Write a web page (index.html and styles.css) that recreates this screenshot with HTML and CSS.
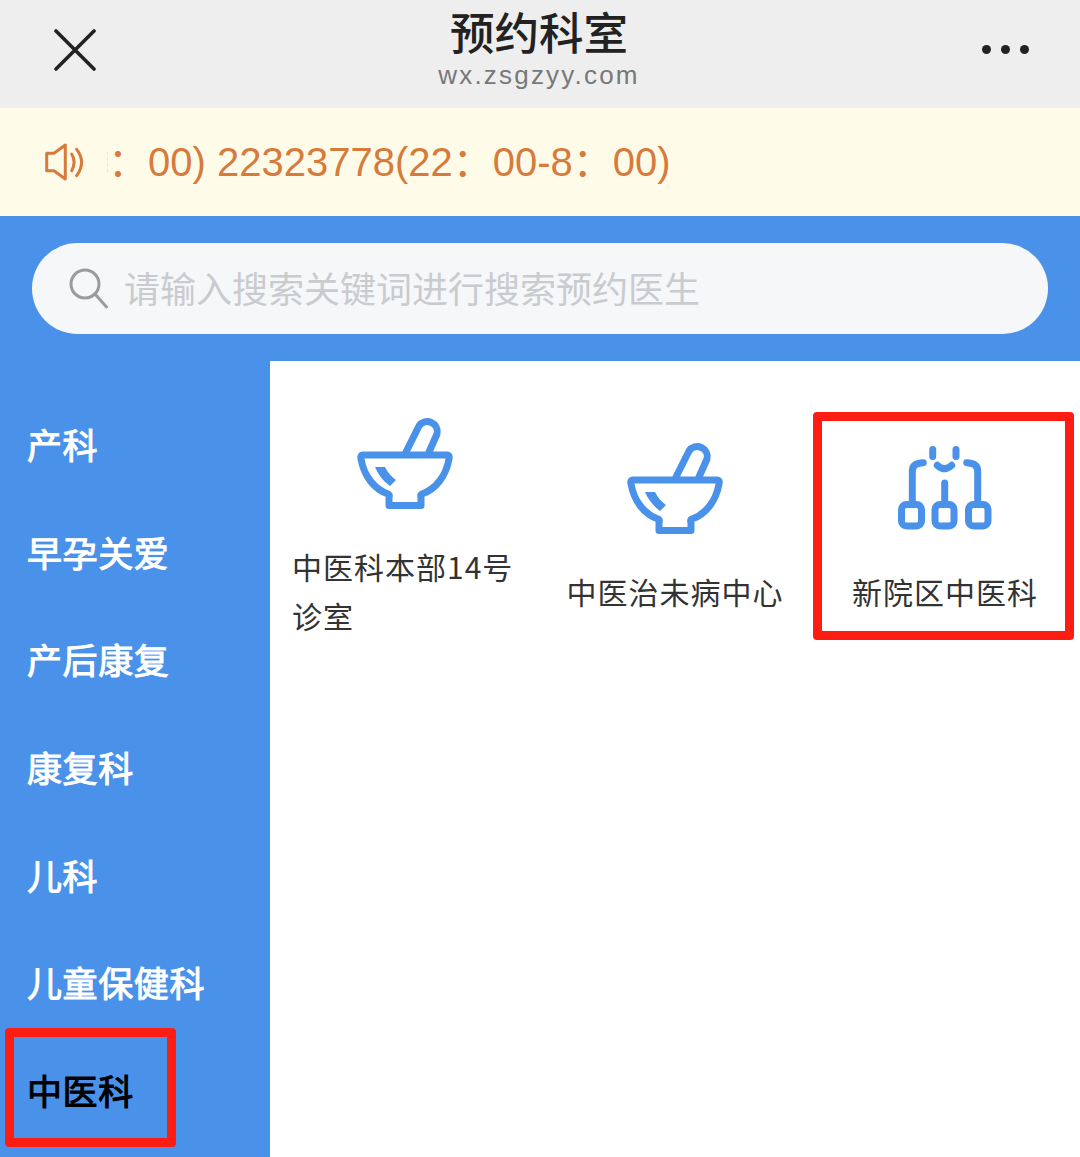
FILE: index.html
```html
<!DOCTYPE html>
<html>
  <head>
    <title>预约科室</title>
    <meta name="viewport" content="width=device-width, initial-scale=1.0">
    <link rel="stylesheet" href="styles.css">
  </head>
  <body>
    <header class="topbar">
      <svg class="close-icon" width="42" height="42" viewBox="0 0 42 42">
        <path d="M2 2 L40 40 M40 2 L2 40" />
      </svg>
      <div class="title-block">
        <div class="title">预约科室</div>
        <div class="domain">wx.zsgzyy.com</div>
      </div>
      <div class="more-dots"><span></span><span></span><span></span></div>
    </header>

    <div class="notice">
      <svg class="speaker-icon" width="44" height="44" viewBox="0 0 44 44">
        <path d="M2.7 12.3 H10 L21.3 4 V38 L10 29.7 H2.7 Z" />
        <path d="M27.7 13 Q32.5 21 27.7 29.7" />
        <path d="M32.7 8.3 Q42.5 21 32.7 34.7" />
      </svg>
      <span class="clip-edge"></span>
      <span class="notice-text">：00) 22323778(22：00-8：00)</span>
    </div>

    <div class="search-wrap">
      <div class="search-box">
        <svg class="search-icon" width="42" height="42" viewBox="0 0 42 42">
          <circle cx="17" cy="17" r="14" />
          <path d="M27 27 L38.5 40" />
        </svg>
        <span class="placeholder">请输入搜索关键词进行搜索预约医生</span>
      </div>
    </div>

    <main class="main">
      <nav class="sidebar">
        <div class="side-item">产科</div>
        <div class="side-item">早孕关爱</div>
        <div class="side-item">产后康复</div>
        <div class="side-item">康复科</div>
        <div class="side-item">儿科</div>
        <div class="side-item">儿童保健科</div>
        <div class="side-item active">中医科</div>
      </nav>

      <section class="dept-grid">
        <div class="dept">
          <svg class="dept-icon" width="100" height="100" viewBox="0 0 100 100">
            <path d="M51 38 L64 12 A10 10 0 0 1 82 20 L74 38" />
            <path d="M8 41 H92 Q95 41 94 45 C91 62 81 75 67 80 Q65 81 66 84 V91.5 H34 V84 Q35 81 33 80 C19 75 9 62 6 45 Q5 41 8 41 Z" />
            <path class="shine" d="M20 53 H30 C33 59 37 63 41 66 L35 72 C28 67 23 60 20 53 Z" />
          </svg>
          <div class="dept-name">中医科本部14号诊室</div>
        </div>
        <div class="dept">
          <svg class="dept-icon" width="100" height="100" viewBox="0 0 100 100">
            <path d="M51 38 L64 12 A10 10 0 0 1 82 20 L74 38" />
            <path d="M8 41 H92 Q95 41 94 45 C91 62 81 75 67 80 Q65 81 66 84 V91.5 H34 V84 Q35 81 33 80 C19 75 9 62 6 45 Q5 41 8 41 Z" />
            <path class="shine" d="M20 53 H30 C33 59 37 63 41 66 L35 72 C28 67 23 60 20 53 Z" />
          </svg>
          <div class="dept-name">中医治未病中心</div>
        </div>
        <div class="dept">
          <svg class="dept-icon" width="100" height="100" viewBox="0 0 100 100">
            <rect x="6.5" y="65.5" width="20" height="21.5" rx="5" />
            <rect x="40" y="65.5" width="19" height="21.5" rx="5" />
            <rect x="73.5" y="65.5" width="19.5" height="21.5" rx="5" />
            <path d="M17.3 65 V32 Q17.3 24 28.3 23.7" />
            <path d="M82.7 65 V32 Q82.7 24 71.7 23.7" />
            <path d="M49.7 44 V65" />
            <path d="M42.3 26.3 Q49.7 33 56.7 26.3" />
            <path d="M37.7 10.5 V17.5 M61 10.5 V17.5" />
          </svg>
          <div class="dept-name">新院区中医科</div>
        </div>
      </section>
    </main>

    <div class="mark mark-menu"></div>
    <div class="mark mark-dept"></div>
  </body>
</html>
```

FILE: styles.css
```css
/* page */
body {
  font-family: "Liberation Sans", "Noto Sans CJK SC", sans-serif;
  margin: 0;
  width: 1080px;
  height: 1157px;
  overflow: hidden;
  position: relative;
  background-color: #fff;
}

/* top bar */
.topbar {
  height: 108px;
  background-color: #eeeeee;
  display: flex;
  align-items: flex-start;
  justify-content: space-between;
  padding: 0 51px 0 54px;
  box-sizing: border-box;
}

.close-icon {
  margin-top: 29px;
  fill: none;
  stroke: #222;
  stroke-width: 3.6;
  stroke-linecap: round;
}

.title-block {
  text-align: center;
  padding-top: 1px;
}

.title {
  font-family: "Noto Sans CJK SC", sans-serif;
  font-size: 44.5px;
  font-weight: 500;
  line-height: 60px;
  color: #222;
}

.domain {
  font-size: 26px;
  line-height: 28px;
  letter-spacing: 2.2px;
  color: #77787a;
}

.more-dots {
  display: flex;
  gap: 10px;
  margin-top: 45px;
}

.more-dots span {
  width: 9px;
  height: 9px;
  border-radius: 50%;
  background-color: #222;
}

/* notice */
.notice {
  height: 108px;
  background-color: #fffbe9;
  display: flex;
  align-items: center;
  padding-left: 44px;
  box-sizing: border-box;
}

.speaker-icon {
  margin-top: 2px;
  fill: none;
  stroke: #d67b3c;
  stroke-width: 3;
  stroke-linecap: round;
  stroke-linejoin: round;
}

/* edge of the scrolling text where it gets clipped */
.clip-edge {
  width: 0;
  height: 20px;
  margin-left: 19px;
  border-left: 1px dashed rgba(214, 123, 60, 0.2);
}

.notice-text {
  margin-left: 0;
  padding-bottom: 6px;
  font-size: 40px;
  color: #d67b3c;
  white-space: nowrap;
}

/* search */
.search-wrap {
  height: 145px;
  background-color: #4a92e9;
  padding: 27px 32px 0;
  box-sizing: border-box;
}

.search-box {
  height: 91px;
  border-radius: 46px;
  background-color: #f6f7f9;
  display: flex;
  align-items: center;
  padding-left: 36px;
}

.search-icon {
  margin-bottom: 2px;
  fill: none;
  stroke: #9b9b9b;
  stroke-width: 3;
  stroke-linecap: round;
}

.placeholder {
  margin-left: 14px;
  padding-bottom: 4px;
  font-family: "Noto Sans CJK SC", sans-serif;
  font-size: 36px;
  color: #c9cbce;
}

/* main */
.main {
  display: flex;
  height: 796px;
}

.sidebar {
  width: 270px;
  flex-shrink: 0;
  background-color: #4a92e9;
  padding-top: 29px;
  box-sizing: border-box;
}

.side-item {
  height: 107.7px;
  line-height: 107.7px;
  padding-left: 27px;
  font-family: "Noto Sans CJK SC", sans-serif;
  font-size: 35px;
  letter-spacing: 0.6px;
  -webkit-text-stroke: 1px currentColor;
  color: #fff;
}

.side-item.active {
  color: #000;
}

.dept-grid {
  flex: 1;
  display: grid;
  grid-template-columns: repeat(3, 270px);
  align-items: center;
  align-content: start;
  padding-top: 53px;
}

.dept {
  display: flex;
  flex-direction: column;
  align-items: center;
  gap: 28px;
  padding: 0 22px;
}

.dept-icon {
  fill: none;
  stroke: #4a92e9;
  stroke-width: 7;
  stroke-linecap: round;
  stroke-linejoin: round;
}

.dept-icon .shine {
  fill: #4a92e9;
  stroke: none;
}

.dept-name {
  font-family: "Noto Sans CJK SC", sans-serif;
  font-size: 30px;
  line-height: 49px;
  letter-spacing: 1px;
  color: #333;
}

/* red annotation boxes */
.mark {
  position: absolute;
  border: 9px solid #fd1d12;
  border-radius: 4px;
  box-sizing: border-box;
}

.mark-menu {
  left: 5px;
  top: 1028px;
  width: 171px;
  height: 119px;
}

.mark-dept {
  left: 813px;
  top: 412px;
  width: 261px;
  height: 228px;
}
```
